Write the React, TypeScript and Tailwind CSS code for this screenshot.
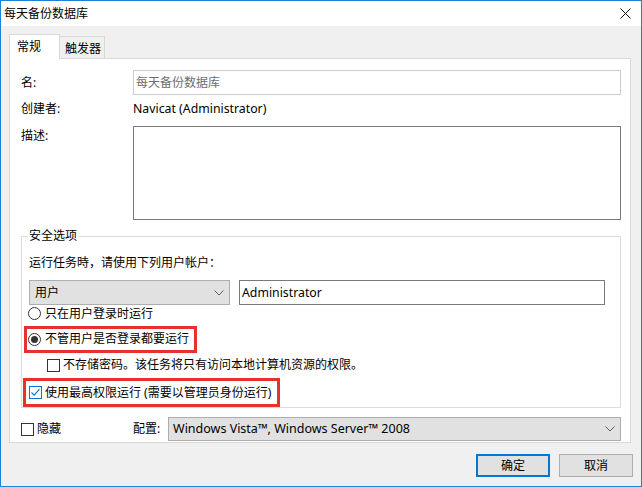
import React from "react";

const font = "font-['Noto_Sans','Noto_Sans_CJK_SC',sans-serif]";

function Chevron({ className = "" }: { className?: string }) {
  return (
    <svg width="10" height="6" viewBox="0 0 10 6" className={className}>
      <path d="M0.5 0.5 L5 5 L9.5 0.5" fill="none" stroke="#5f5f5f" strokeWidth="1" />
    </svg>
  );
}

function CheckBox({ checked = false }: { checked?: boolean }) {
  return (
    <span
      className={`w-[13px] h-[13px] shrink-0 bg-white border flex items-center justify-center ${
        checked ? "border-[#0078d7]" : "border-[#333333]"
      }`}
    >
      {checked && (
        <svg width="11" height="11" viewBox="0 0 11 11">
          <path d="M1.5 5.5 L4.2 8.2 L9.5 2.2" fill="none" stroke="#0078d7" strokeWidth="1.1" />
        </svg>
      )}
    </span>
  );
}

function Radio({ checked = false }: { checked?: boolean }) {
  return (
    <span className="w-[13px] h-[13px] shrink-0 rounded-full bg-white border border-[#333333] flex items-center justify-center">
      {checked && <span className="w-[7px] h-[7px] rounded-full bg-[#333333]" />}
    </span>
  );
}

export default function App() {
  return (
    <div
      className={`w-[642px] h-[487px] border border-[#1883d7] bg-[#f0f0f0] flex flex-col text-[12px] leading-[16px] text-black ${font}`}
    >
      {/* title bar */}
      <div className="h-[25px] bg-white flex items-center justify-between pl-[3px] pr-[10px] shrink-0">
        <span>每天备份数据库</span>
        <svg width="11" height="11" viewBox="0 0 11 11">
          <path d="M0.5 0.5 L10.5 10.5 M10.5 0.5 L0.5 10.5" stroke="#111" strokeWidth="1" />
        </svg>
      </div>

      <div className="flex flex-col pl-[8px] pt-[8px]">
        {/* tabs */}
        <div className="flex items-end h-[24px]">
          <div className="relative z-10 h-[25px] -mb-[1px] w-[51px] bg-white border-x border-t border-[#d9d9d9] pl-[7px] pt-[4px]">
            常规
          </div>
          <div className="h-[22px] w-[45px] border-t border-r border-[#d9d9d9] pl-[5px] pt-[5px] leading-[14px]">
            触发器
          </div>
        </div>

        {/* panel */}
        <div className="w-[622px] h-[385px] bg-white border border-[#d9d9d9] pl-[11px] pt-[11px] flex flex-col">
          <div className="flex items-center h-[25px]">
            <span className="w-[112px]">名:</span>
            <div className="w-[488px] h-[25px] border border-[#cccccc] flex items-center pl-[2px] text-[#6d6d6d]">
              每天备份数据库
            </div>
          </div>
          <div className="flex items-center h-[24px] mt-[2px]">
            <span className="w-[112px]">创建者:</span>
            <span className="text-[12.3px]">Navicat (Administrator)</span>
          </div>
          <div className="flex mt-[5px]">
            <span className="w-[112px] pt-[2px]">描述:</span>
            <div className="w-[488px] h-[94px] border border-[#7a7a7a] bg-white" />
          </div>

          {/* security group */}
          <div className="relative mt-[16px] w-[600px] h-[172px] border border-[#dcdcdc] pl-[7px] pt-[18px] flex flex-col">
            <span className="absolute left-[6px] -top-[9px] bg-white px-[1px] leading-[16px]">安全选项</span>
            <div className="h-[16px]">运行任务時，请使用下列用户帐户：</div>
            <div className="flex mt-[9px] gap-[9px]">
              <div className="w-[201px] h-[25px] bg-[#e1e1e1] border border-[#adadad] flex items-center justify-between pl-[5px] pr-[5px]">
                <span>用户</span>
                <Chevron />
              </div>
              <div className="w-[366px] h-[25px] border border-[#7a7a7a] bg-white flex items-center pl-[2px] text-[12.3px]">
                Administrator
              </div>
            </div>
            <div className="flex items-center h-[18px] gap-[4px] -ml-[1px]">
              <Radio />
              <span>只在用户登录时运行</span>
            </div>
            <div className="mt-[3px] -ml-[5px] w-[173px] h-[27px] border-[3px] border-[#e8302e] flex items-center pl-[1px] gap-[4px]">
              <Radio checked />
              <span>不管用户是否登录都要运行</span>
            </div>
            <div className="flex items-center h-[18px] mt-[4px] ml-[18px] gap-[3px]">
              <CheckBox />
              <span>不存储密码。该任务将只有访问本地计算机资源的权限。</span>
            </div>
            <div className="mt-[4px] -ml-[6px] w-[257px] h-[29px] border-[3px] border-[#e8302e] flex items-center pl-[3px] gap-[3px]">
              <CheckBox checked />
              <span>使用最高权限运行 (需要以管理员身份运行)</span>
            </div>
          </div>

          {/* hidden / config */}
          <div className="flex items-center h-[24px] mt-[9px]">
            <div className="w-[112px] flex items-center gap-[3px]">
              <CheckBox />
              <span>隐藏</span>
            </div>
            <span className="w-[35px]">配置:</span>
            <div className="w-[453px] h-[24px] bg-[#e1e1e1] border border-[#adadad] flex items-center justify-between pl-[4px] pr-[5px]">
              <span className="text-[12.5px]">Windows Vista™, Windows Server™ 2008</span>
              <Chevron />
            </div>
          </div>
        </div>

        {/* buttons */}
        <div className="flex justify-end gap-[9px] mt-[11px] pr-[8px]">
          <button className="w-[74px] h-[23px] bg-[#e1e1e1] border-2 border-[#0078d7] flex items-center justify-center">
            确定
          </button>
          <button className="w-[74px] h-[23px] bg-[#e1e1e1] border border-[#adadad] flex items-center justify-center">
            取消
          </button>
        </div>
      </div>
    </div>
  );
}
